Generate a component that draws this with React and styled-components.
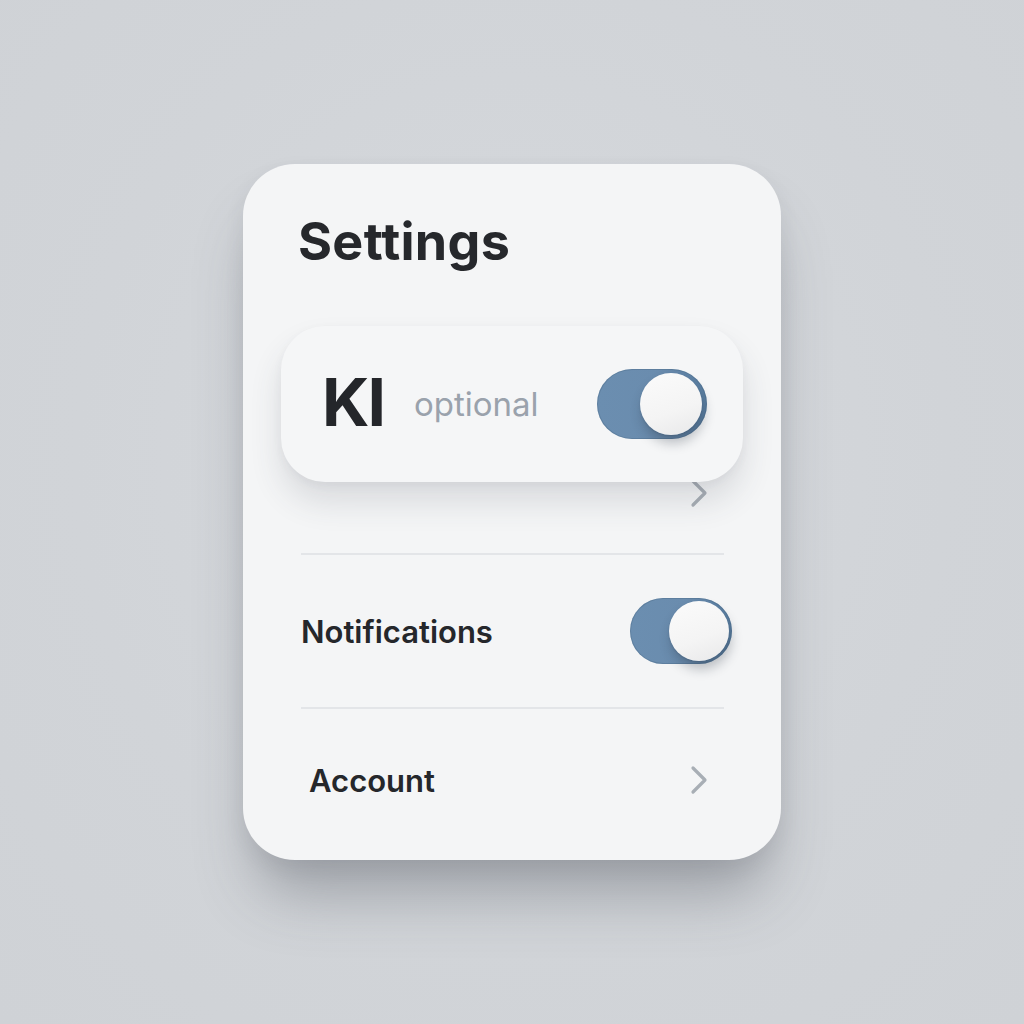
import React from "react";
import styled, { createGlobalStyle } from "styled-components";

const Global = createGlobalStyle`
  html, body { margin: 0; padding: 0; }
  body {
    background: #d2d5d9;
    font-family: Inter, "Noto Sans", "Liberation Sans", sans-serif;
  }
`;

const Page = styled.div`
  width: 1024px;
  height: 1024px;
  display: flex;
  align-items: center;
  justify-content: center;
  background: radial-gradient(ellipse at 50% 45%, #d6d9dd 0%, #d1d4d8 60%, #cfd2d6 100%);
`;

const Card = styled.div`
  width: 538px;
  height: 696px;
  box-sizing: border-box;
  padding: 52px 57px 0 58px;
  background: #f4f5f6;
  border-radius: 52px;
  display: flex;
  flex-direction: column;
  box-shadow: 0 46px 60px -14px rgba(80, 86, 96, 0.42), 0 8px 20px rgba(60, 66, 76, 0.08);
`;

const Title = styled.h1`
  margin: 0 0 0 -3px;
  font-size: 52px;
  line-height: 1;
  font-weight: 700;
  color: #26282c;
  letter-spacing: 0.3px;
`;

const Elevated = styled.div`
  margin: 58px -19px 0 -20px;
  height: 156px;
  box-sizing: border-box;
  padding: 0 36px 0 41px;
  background: #f5f6f7;
  border-radius: 44px;
  display: flex;
  align-items: center;
  z-index: 1;
  box-shadow: 0 20px 32px rgba(60, 66, 76, 0.14), 0 4px 10px rgba(60, 66, 76, 0.05);
`;

const Big = styled.span`
  font-size: 66px;
  line-height: 1;
  font-weight: 700;
  color: #24262a;
  letter-spacing: -2px;
  margin-top: -4px;
`;

const Hint = styled.span`
  margin-left: 30px;
  font-size: 33px;
  line-height: 1;
  font-weight: 400;
  color: #9aa2ac;
`;

const Track = styled.div`
  margin-left: auto;
  margin-right: ${(p) => p.$mr || 0}px;
  width: ${(p) => p.$w}px;
  height: ${(p) => p.$h}px;
  box-sizing: border-box;
  padding: 0 ${(p) => p.$pad}px;
  border-radius: 999px;
  display: flex;
  align-items: center;
  justify-content: flex-end;
  background: linear-gradient(90deg, #6b8eb0 0%, #6a8cae 55%, #5a7ea1 100%);
  box-shadow: inset 0 0 0 1px rgba(70, 100, 130, 0.35);
`;

const Knob = styled.div`
  width: ${(p) => p.$d}px;
  height: ${(p) => p.$d}px;
  border-radius: 50%;
  background: linear-gradient(160deg, #fbfbfb 0%, #f4f4f4 60%, #e8e8e9 100%);
  box-shadow: 2px 8px 12px rgba(30, 40, 55, 0.28), 0 1px 2px rgba(0, 0, 0, 0.12);
`;

const UnderRow = styled.div`
  margin-top: -4px;
  height: 75px;
  display: flex;
  justify-content: flex-end;
  align-items: flex-start;
  padding-right: 16px;
`;

const Divider = styled.div`
  height: 2px;
  background: #e3e5e8;
  flex: none;
`;

const Row = styled.div`
  height: ${(p) => p.$h}px;
  display: flex;
  align-items: center;
  padding-left: ${(p) => p.$pl || 0}px;
  padding-right: ${(p) => p.$pr || 0}px;
`;

const Label = styled.span`
  font-size: 31px;
  line-height: 1;
  font-weight: 600;
  color: #25272b;
`;

const ChevronBox = styled.svg`
  margin-left: auto;
  display: block;
  flex: none;
`;

const Chevron = () => (
  <ChevronBox width="18" height="30" viewBox="0 0 18 30">
    <polyline
      points="3,3 15,15 3,27"
      fill="none"
      stroke="#a8aeb5"
      strokeWidth="3.2"
      strokeLinecap="round"
      strokeLinejoin="round"
    />
  </ChevronBox>
);

const Toggle = ({ w, h, d, pad, mr }) => (
  <Track $w={w} $h={h} $pad={pad} $mr={mr}>
    <Knob $d={d} />
  </Track>
);

export default function App() {
  return (
    <>
      <Global />
      <Page>
        <Card>
          <Title>Settings</Title>
          <Elevated>
            <Big>KI</Big>
            <Hint>optional</Hint>
            <Toggle w={110} h={70} d={62} pad={5} />
          </Elevated>
          <UnderRow>
            <Chevron />
          </UnderRow>
          <Divider />
          <Row $h={152}>
            <Label>Notifications</Label>
            <Toggle w={102} h={66} d={60} pad={3} mr={-8} />
          </Row>
          <Divider />
          <Row $h={142} $pl={8} $pr={16}>
            <Label>Account</Label>
            <Chevron />
          </Row>
        </Card>
      </Page>
    </>
  );
}
